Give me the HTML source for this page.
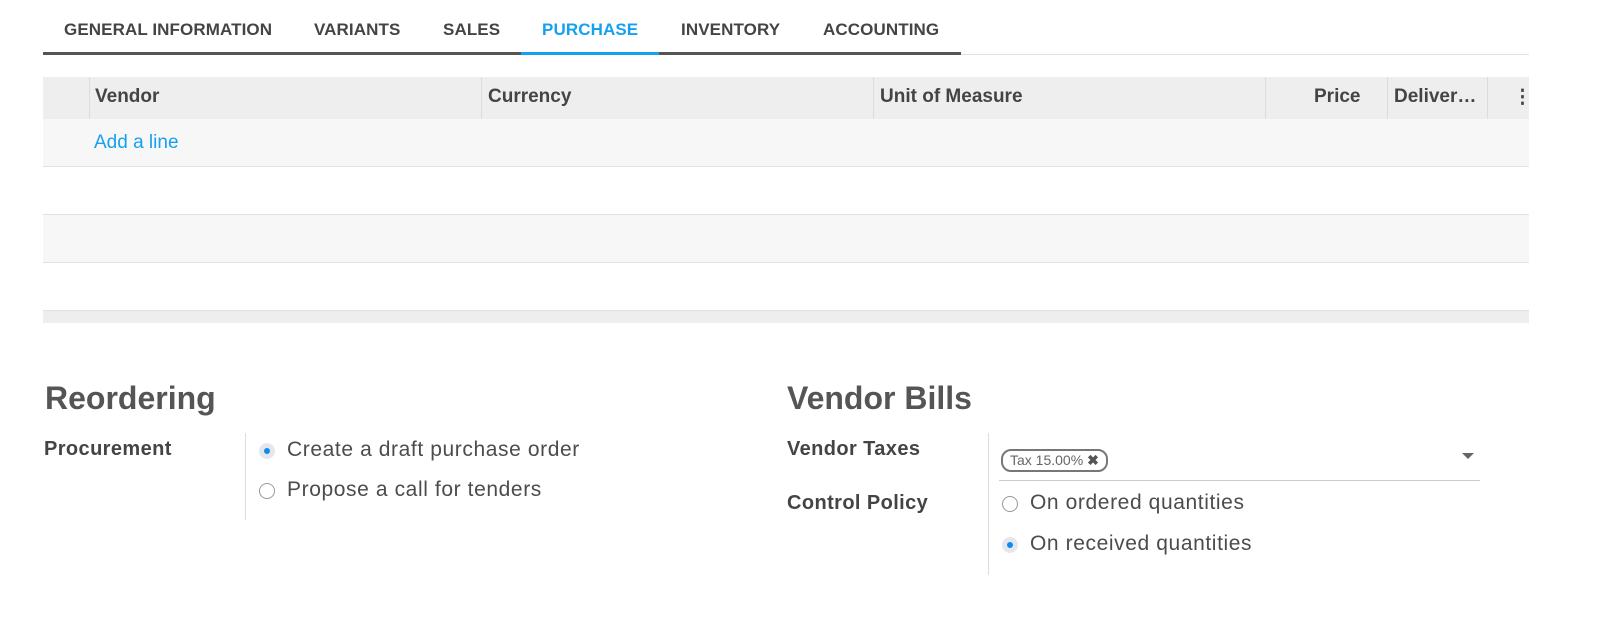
<!DOCTYPE html>
<html><head><style>
body{margin:0;width:1604px;height:636px;background:#fff;font-family:"Liberation Sans",sans-serif;color:#4c4c4c;position:relative;overflow:hidden}
.a{position:absolute}
.tab{position:absolute;top:20px;font-size:17px;font-weight:bold;color:#444;letter-spacing:0.1px}
.hd{position:absolute;top:86px;font-size:19px;font-weight:bold;color:#444}
.row{position:absolute;left:43px;width:1486px;height:47px;border-bottom:1px solid #dee2e6}
.vl{position:absolute;top:77px;height:42px;width:1px;background:#dcdcdc}
.lab{position:absolute;font-size:20px;font-weight:bold;color:#444;letter-spacing:0.4px}
.opt{position:absolute;font-size:21px;color:#4c4c4c;letter-spacing:0.6px}
.rad{position:absolute;width:16px;height:16px;border-radius:50%;box-sizing:border-box;border:1px solid #999;background:#fff}
.rad.on{border:none;background:#e4e8ec}
.rad.on::after{content:"";position:absolute;left:5px;top:5px;width:6px;height:6px;border-radius:50%;background:#0d8bf0}
</style></head><body>
<div class="tab" style="left:64px">GENERAL INFORMATION</div>
<div class="tab" style="left:314px">VARIANTS</div>
<div class="tab" style="left:443px">SALES</div>
<div class="tab" style="left:542px;color:#16a0f0">PURCHASE</div>
<div class="tab" style="left:681px">INVENTORY</div>
<div class="tab" style="left:823px">ACCOUNTING</div>
<div class="a" style="left:43px;top:54px;width:1486px;height:1px;background:#e2e2e2"></div>
<div class="a" style="left:43px;top:52px;width:478px;height:3px;background:#555"></div>
<div class="a" style="left:521px;top:52px;width:138px;height:3px;background:#16a0f0"></div>
<div class="a" style="left:659px;top:52px;width:302px;height:3px;background:#555"></div>

<div class="a" style="left:43px;top:77px;width:1486px;height:42px;background:#eeeeee;border-bottom:1px solid #e0e0e0"></div>
<div class="vl" style="left:89px"></div><div class="vl" style="left:481px"></div><div class="vl" style="left:873px"></div><div class="vl" style="left:1265px"></div><div class="vl" style="left:1387px"></div><div class="vl" style="left:1487px"></div>
<div class="hd" style="left:95px">Vendor</div>
<div class="hd" style="left:488px">Currency</div>
<div class="hd" style="left:880px">Unit of Measure</div>
<div class="hd" style="left:1314px">Price</div>
<div class="hd" style="left:1394px">Deliver…</div>
<div class="hd" style="left:1513px">⋮</div>
<div class="row" style="top:119px;background:#f7f7f7"></div>
<div class="a" style="left:94px;top:132px;font-size:19px;color:#16a0f0">Add a line</div>
<div class="row" style="top:167px"></div>
<div class="row" style="top:215px;background:#f7f7f7"></div>
<div class="row" style="top:263px"></div>
<div class="a" style="left:43px;top:311px;width:1486px;height:12px;background:#eeeeee"></div>

<div class="a" style="left:45px;top:380px;font-size:32px;font-weight:bold;color:#555">Reordering</div>
<div class="lab" style="left:44px;top:438px">Procurement</div>
<div class="a" style="left:245px;top:433px;width:1px;height:87px;background:#ddd"></div>
<div class="rad on" style="left:259px;top:443px"></div>
<div class="opt" style="left:287px;top:438px">Create a draft purchase order</div>
<div class="rad" style="left:259px;top:483px"></div>
<div class="opt" style="left:287px;top:478px">Propose a call for tenders</div>

<div class="a" style="left:787px;top:380px;font-size:32px;font-weight:bold;color:#555">Vendor Bills</div>
<div class="lab" style="left:787px;top:438px">Vendor Taxes</div>
<div class="lab" style="left:787px;top:492px">Control Policy</div>
<div class="a" style="left:988px;top:433px;width:1px;height:142px;background:#ddd"></div>
<div class="a" style="left:1001px;top:449px;height:19px;padding:0 7px;border:2px solid #777;border-radius:10px;font-size:14px;line-height:19px;color:#666">Tax 15.00% <b style="color:#555">✖</b></div>
<div class="a" style="left:1462px;top:453px;width:0;height:0;border-left:6px solid transparent;border-right:6px solid transparent;border-top:6px solid #666"></div>
<div class="a" style="left:999px;top:480px;width:481px;height:1px;background:#ccc"></div>
<div class="rad" style="left:1002px;top:496px"></div>
<div class="opt" style="left:1030px;top:491px">On ordered quantities</div>
<div class="rad on" style="left:1002px;top:537px"></div>
<div class="opt" style="left:1030px;top:532px">On received quantities</div>
</body></html>
